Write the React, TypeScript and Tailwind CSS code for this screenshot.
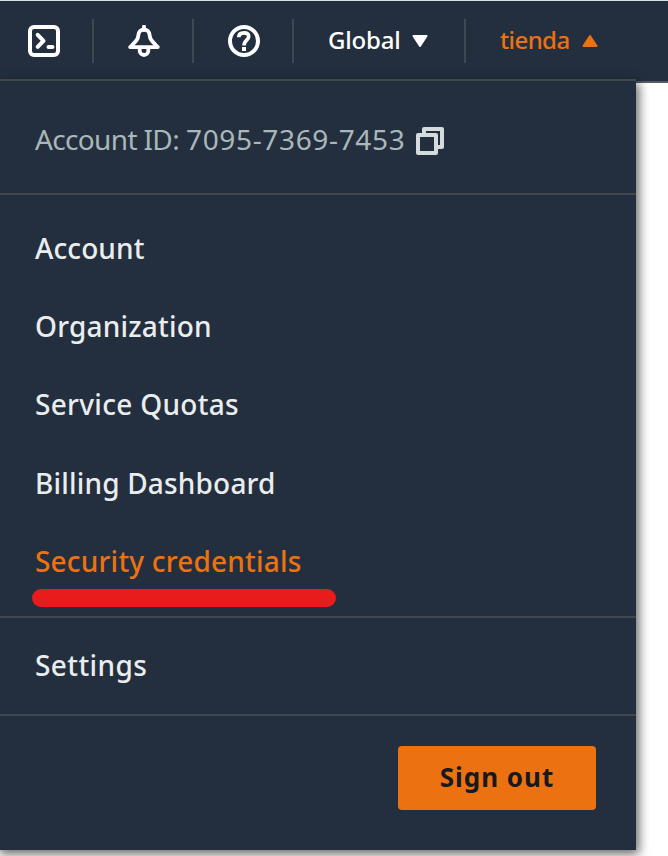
import React from "react";

const links = [
  { label: "Account", style: "text-[#eaeded] tracking-[0.1px]" },
  { label: "Organization", style: "text-[#eaeded] tracking-[0.2px]" },
  { label: "Service Quotas", style: "text-[#eaeded] tracking-[0.3px]" },
  { label: "Billing Dashboard", style: "text-[#eaeded] tracking-[0.18px]" },
  { label: "Security credentials", style: "text-[#ec7211] tracking-[0.2px]" },
];

function Divider() {
  return <div className="h-11 w-0.5 shrink-0 bg-[#414750]" />;
}

function ShellIcon() {
  return (
    <svg width="32" height="32" viewBox="0 0 32 32" fill="none" stroke="#fff" strokeWidth="4" strokeLinecap="round" strokeLinejoin="round">
      <rect x="2" y="2" width="28" height="28" rx="4" />
      <path d="M9.700 9.800L15.500 15.800L9.700 21.800" />
      <path d="M20.500 22H24.500" />
    </svg>
  );
}

function BellIcon() {
  return (
    <svg width="32" height="32" viewBox="0 0 32 32" fill="none" stroke="#fff" strokeWidth="3.800" strokeLinejoin="round">
      <path d="M16 1.500V5" strokeLinecap="round" />
      <path d="M16 4.700C12.300 4.700 10.600 7 10.300 10.500C10 14.500 8 16.200 2.200 22.100H29.800C24 16.200 22 14.500 21.700 10.500C21.400 7 19.700 4.700 16 4.700Z" />
      <path d="M11.700 23V25.700A4.300 4.300 0 0 0 20.300 25.700V23" />
    </svg>
  );
}

function HelpIcon() {
  return (
    <svg width="32" height="32" viewBox="0 0 32 32" fill="none" stroke="#fff">
      <circle cx="16" cy="16" r="14" strokeWidth="4" />
      <path d="M10.800 12.300C10.800 9.200 12.800 7.900 16 7.900C19 7.900 20.700 9.400 20.700 11.600C20.700 15.300 16 15.300 16 20.400" strokeWidth="3.700" />
      <path d="M16 22V26" strokeWidth="4" />
    </svg>
  );
}

function CopyIcon() {
  return (
    <svg width="28" height="28" viewBox="0 0 28 28" fill="none" stroke="#d5dbdb" strokeWidth="4" strokeLinejoin="round">
      <path d="M8 8V2H26V20H20" />
      <path d="M2 8H20V26H2Z" />
    </svg>
  );
}

export default function App() {
  return (
    <div className="relative h-[856px] w-[668px] overflow-hidden bg-white font-['Noto_Sans',sans-serif]">
      <header className="flex h-[83px] items-start border-t border-b-2 border-t-[#d5e3e8] border-b-[#545b64] bg-[#232f3e] pt-[18px] text-2xl leading-[42px] font-medium">
        <button className="flex h-11 w-[92px] items-center pl-7"><ShellIcon /></button>
        <Divider />
        <button className="flex h-11 w-[98px] items-center pl-[34px]"><BellIcon /></button>
        <Divider />
        <button className="flex h-11 w-[98px] items-center pl-[34px]"><HelpIcon /></button>
        <Divider />
        <button className="flex h-11 w-[170px] items-center pl-[34px] text-white">
          <span className="w-[84px] pb-0.5 text-left tracking-[-0.2px]">Global</span>
          <svg width="16" height="14" viewBox="0 0 16 14"><path d="M1.500 2H14.500L8 12Z" fill="#fff" stroke="#fff" strokeWidth="2" strokeLinejoin="round" /></svg>
        </button>
        <Divider />
        <button className="flex h-11 items-center pl-[34px] text-[#ec7211]">
          <span className="w-[82px] pb-0.5 text-left tracking-[-0.6px]">tienda</span>
          <svg width="16" height="14" viewBox="0 0 16 14"><path d="M1.500 12H14.500L8 2Z" fill="#ec7211" stroke="#ec7211" strokeWidth="2" strokeLinejoin="round" /></svg>
        </button>
      </header>

      <div className="absolute top-[83px] left-0 h-[767px] w-[636px] shadow-[1px_2px_10px_2px_rgba(0,0,0,0.6)]" />
      <nav className="absolute top-[79px] left-0 flex h-[771px] w-[636px] flex-col border-t-2 border-[#414750] bg-[#232f3e] text-[28px] font-medium">
        <div className="flex h-[114px] items-center border-b-2 border-[#414750] pt-2 pl-[35px] text-[#aab7b8]">
          <span className="flex w-[381px] pb-1 font-normal whitespace-nowrap">
            <span className="w-[151px] tracking-[-0.65px]">Account ID:</span>
            <span className="tracking-[0.65px]">7095-7369-7453</span>
          </span>
          <CopyIcon />
        </div>
        <ul className="flex h-[423px] flex-col border-b-2 border-[#414750] pt-[14px] pl-[35px]">
          {links.map((link) => (
            <li key={link.label} className="h-[78.200px] shrink-0 leading-[78px] whitespace-nowrap">
              <a className={link.style}>{link.label}</a>
            </li>
          ))}
        </ul>
        <div className="flex h-[98px] items-center border-b-2 border-[#414750] pb-0.5 pl-[35px] text-[#eaeded]">
          <a className="tracking-[0.4px]">Settings</a>
        </div>
        <div className="flex justify-end pt-[30px] pr-10">
          <button className="h-16 w-[198px] rounded-[4px] bg-[#ec7211] pb-0.5 text-[26px] font-bold tracking-[1px] text-[#16191f]">Sign out</button>
        </div>
      </nav>
      <div className="absolute top-[589px] left-8 h-[18px] w-[304px] rounded-full bg-[#e81c1c]" />
    </div>
  );
}
